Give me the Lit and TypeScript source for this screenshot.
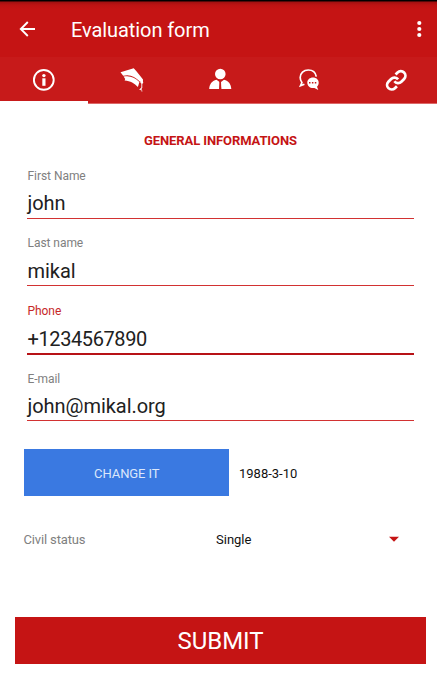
import { LitElement, html, css, svg } from "lit";
import { customElement, property, state } from "lit/decorators.js";
import { classMap } from "lit/directives/class-map.js";

const icons = {
  info: svg`<circle cx="12.800" cy="12.900" r="9.900" fill="none" stroke="#fff" stroke-width="1.900"/>
    <circle cx="12.900" cy="8.600" r="1.700" fill="#fff"/>
    <path d="M11.300 11.300h3.200v7.500h-3.200z" fill="#fff"/>`,
  school: svg`<path d="M1.500 5.200 14.700 1.300l2.300 2.400c2.300 2.700 4.600 5.500 7 8.700l-.2 4-1-.2-.5-1.200-1.500-.5C16 9.500 10.800 6.900 4.200 8.700z" fill="#fff"/>
    <path d="M4.600 9.600c6-1.500 11 .9 15.800 5.300l-1.500 5.100c-3.500-3.800-7.300-6-13.300-6.500l.6-1.600z" fill="#fff"/>
    <path d="M22.800 13v8" stroke="#fff" stroke-width=".9" fill="none"/>
    <circle cx="22.800" cy="15.300" r="1.300" fill="#fff"/>
    <path d="M22.500 20.300l-2.300 2.500 1.200.5 1-1.200.1 2.300h.9z" fill="#fff"/>`,
  person: svg`<circle cx="13.300" cy="7" r="5.300" fill="#fff"/>
    <path d="M2.200 22c.2-4.500 2.500-8.300 7.300-9.300l3 2.400-.3 6.900zM24.300 22c-.2-4.500-2.500-8.300-7.300-9.300l-3 2.400.3 6.900z" fill="#fff"/>
    <path d="M12.300 14.500h1.900l-.4 1.500.4 6h-1.900l.4-6z" fill="#c71c1c"/>`,
  chat: svg`<path d="M20.300 9.600C19.600 5.600 16.500 3 12.300 3 7.600 3 4.200 6.300 4.200 10.600c0 2 .7 3.700 1.700 5L4.500 18.800l3.900-1.500" fill="none" stroke="#fff" stroke-width="1.700"/>
    <path d="M17 10.600c3.200 0 5.700 2.200 5.700 5.200 0 1.700-.8 3.100-1.700 4l1.300 3.100-3.900-1.900-1.400.1c-3.200 0-5.700-2.300-5.700-5.300s2.500-5.200 5.700-5.200z" fill="#fff"/>
    <path d="M13 15h1.500v1.500h-1.500zM15.900 15h1.500v1.500h-1.500zM18.800 15h1.500v1.500h-1.500z" fill="#c71c1c"/>`,
  link: svg`<g transform="translate(3.200 2.300) scale(.92)" fill="none" stroke="#fff" stroke-width="3">
    <path d="M10 13a5 5 0 0 0 7.540.540l3-3a5 5 0 0 0-7.070-7.070l-2.200 2.200"/>
    <path d="M14 11a5 5 0 0 0-7.540-.540l-3 3a5 5 0 0 0 7.070 7.070l2.200-2.200"/></g>`,
};
type IconName = keyof typeof icons;

@customElement("form-field")
class FormField extends LitElement {
  @property() label = "";
  @property() value = "";
  @property({ type: Boolean, reflect: true }) active = false;

  static styles = css`
    :host { display: flex; flex-direction: column; height: 67.600px; color: #212121; }
    .label { font-size: 12px; line-height: 14px; color: #808080; padding-left: 0.500px; letter-spacing: -0.050px; }
    .value { font-size: 20px; line-height: 24px; margin-top: 8.500px; padding-left: 0.500px; white-space: nowrap; letter-spacing: -0.050px; }
    .line { height: 1px; margin-top: 2.300px; background: #d23232; }
    :host([active]) .label { color: #c62828; }
    :host([active]) .value { letter-spacing: -0.400px; }
    :host([active]) .line { height: 2px; background: #b71216; }
  `;

  render() {
    return html`<div class="label">${this.label}</div>
      <div class="value">${this.value}</div>
      <div class="line"></div>`;
  }
}

@customElement("app-root")
class AppRoot extends LitElement {
  @state() private tab: IconName = "info";

  private fields = [
    { label: "First Name", value: "john" },
    { label: "Last name", value: "mikal" },
    { label: "Phone", value: "+1234567890", active: true },
    { label: "E-mail", value: "john@mikal.org" },
  ];

  static styles = css`
    :host { display: flex; flex-direction: column; height: 682px; background: #fff; font-family: Roboto, "Noto Sans", sans-serif; overflow: hidden; }
    * { box-sizing: border-box; }
    button { font: inherit; border: 0; padding: 0; margin: 0; border-radius: 0; }
    .status { height: 1px; background: #000; flex: none; }
    .bar { height: 56px; flex: none; display: flex; align-items: center; padding: 1px 14px 1px 18px; color: #fff;
      background: linear-gradient(#300303 0, #a51111 1.500px, #bd1313 4px, #c51414 8px); }
    .title { flex: 1; font-size: 20px; line-height: 24px; margin-left: 33px; padding-top: 2px; letter-spacing: -0.080px; }
    .bar svg, .tabs svg { display: block; }
    .tabs { height: 47px; flex: none; display: grid; grid-template-columns: 88px 88px 88px 89px 84px; background: #c71a1a; border-bottom: 1px solid #dc6868; }
    .tab { background: none; display: flex; justify-content: center; padding-top: 10px; height: 47px; }
    .tab.on { border-bottom: 3px solid #fff; }
    h2 { margin: 29px 0 0; font-size: 13px; line-height: 16px; font-weight: 700; color: #c51414; text-align: center; padding-left: 4px; letter-spacing: -0.100px; }
    .fields { margin: 19.900px 23.500px 0 27px; }
    .date { display: flex; align-items: center; height: 47px; margin: 10.100px 24px 0 23.500px; font-size: 13px; }
    .change { width: 205.500px; height: 47px; background: #3a79e1; color: #dbe7fb; padding: 1px 0 0 1px; letter-spacing: -0.100px; }
    .day { margin-left: 10px; padding-top: 1px; color: #111; }
    .status-row { display: flex; align-items: center; height: 20px; margin: 33px 38px 0 23.500px; font-size: 13px; color: #808080; }
    .civil { width: 192.500px; letter-spacing: -0.150px; }
    .pick { flex: 1; color: #111; }
    .submit { width: 411px; height: 47px; margin: 68px 0 0 15px; background: #c51414; color: #fff; font-size: 24px; }
  `;

  render() {
    const tabs = Object.keys(icons) as IconName[];
    return html`
      <div class="status"></div>
      <header class="bar">
        <svg width="20" height="20" viewBox="0 0 20 20" fill="none" stroke="#fff" stroke-width="1.900"><path d="M17 10H3M9.800 3 2.800 10l7 7"/></svg>
        <div class="title">Evaluation form</div>
        <svg width="8" height="20" viewBox="0 0 8 20" fill="#fff"><circle cx="4.300" cy="4" r="2.100"/><circle cx="4.300" cy="10" r="2.100"/><circle cx="4.300" cy="16" r="2.100"/></svg>
      </header>
      <nav class="tabs">
        ${tabs.map((name) => html`<button class=${classMap({ tab: true, on: name === this.tab })} @click=${() => (this.tab = name)}>
          <svg width="26" height="26" viewBox="0 0 26 26">${icons[name]}</svg>
        </button>`)}
      </nav>
      <h2>GENERAL INFORMATIONS</h2>
      <div class="fields">
        ${this.fields.map((f) => html`<form-field .label=${f.label} .value=${f.value} ?active=${!!f.active}></form-field>`)}
      </div>
      <div class="date"><button class="change">CHANGE IT</button><span class="day">1988-3-10</span></div>
      <div class="status-row">
        <span class="civil">Civil status</span><span class="pick">Single</span>
        <svg width="10" height="6" viewBox="0 0 10 6"><path d="M0 .7h10L5 5.700z" fill="#c51414"/></svg>
      </div>
      <button class="submit">SUBMIT</button>
    `;
  }
}
